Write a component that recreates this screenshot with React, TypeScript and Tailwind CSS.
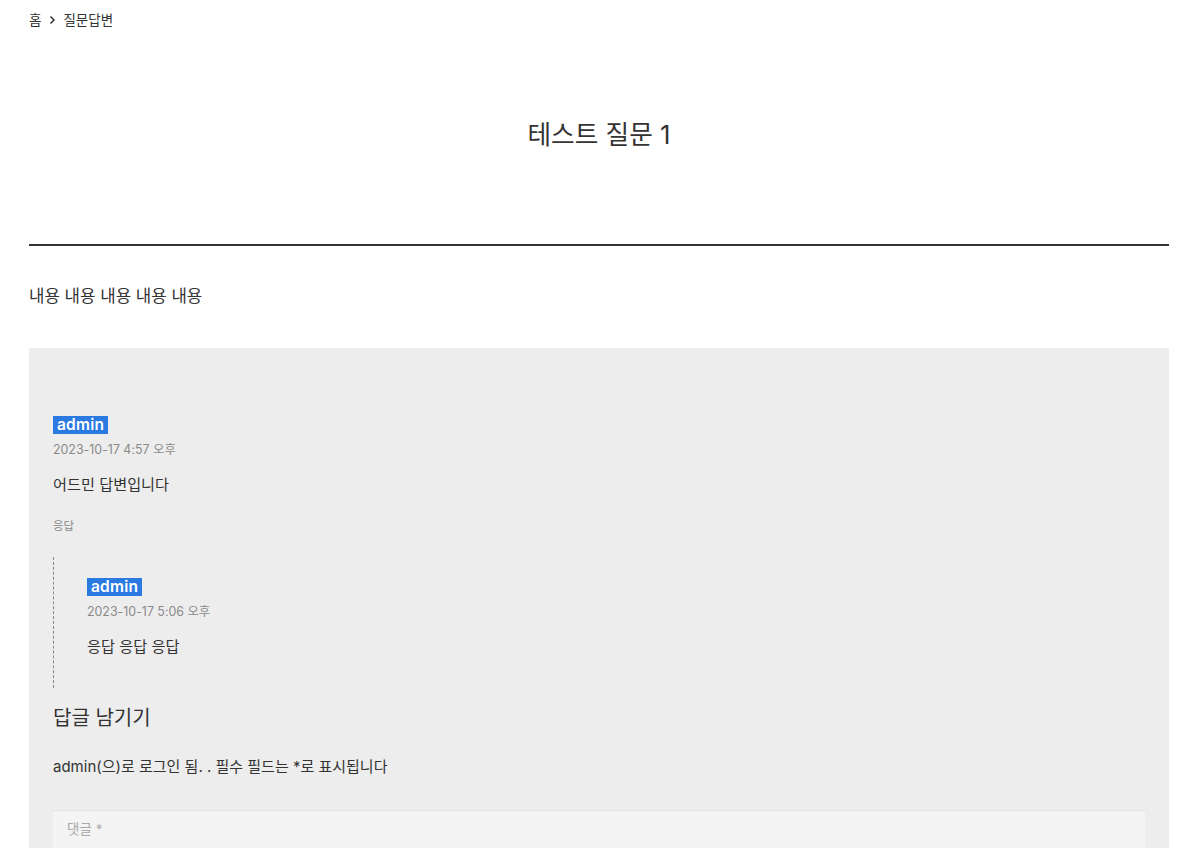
import React from "react";

const font = { fontFamily: 'Inter, "Noto Sans CJK KR", sans-serif' };

function Comment({ date, body, reply }: { date: string; body: string; reply?: boolean }) {
  return (
    <div>
      <span className="inline-block bg-[#2a7ae2] text-white font-semibold text-[15.5px] leading-[18px] px-[4px] tracking-[0.2px]">admin</span>
      <div className="mt-[5px] text-[12.4px] leading-[18px] text-[#8a8a8a]">{date}</div>
      <div className="mt-[15px] text-[15.2px] leading-[22px] text-[#333]">{body}</div>
      {reply && <div className="mt-[21px] text-[11.5px] leading-[18px] text-[#8a8a8a]">응답</div>}
    </div>
  );
}

export default function App() {
  return (
    <div className="bg-white min-h-[848px]" style={font}>
      <div className="w-[1140px] ml-[29px]">
        <div className="pt-[10px] flex items-center gap-[4px] text-[13.5px] leading-[20px] text-[#333]">
          <span>홈</span>
          <svg width="12" height="12" viewBox="0 0 12 12" className="mx-[1px]">
            <path d="M4.5 2.5 L8 6 L4.5 9.5" stroke="#333" strokeWidth="1.5" fill="none" />
          </svg>
          <span>질문답변</span>
        </div>
        <h1 className="mt-[89px] text-center text-[25.7px] leading-[32px] text-[#333] font-normal">테스트 질문 1</h1>
        <div className="mt-[93px] h-[2px] bg-[#333]" />
        <p className="mt-[39px] text-[16.8px] leading-[22px] text-[#333]">내용 내용 내용 내용 내용</p>
        <div className="mt-[41px] bg-[#ededed] px-[24px] pt-[64px] pb-[40px]">
          <Comment date="2023-10-17 4:57 오후" body="어드민 답변입니다" reply />
          <div className="mt-[22px] border-l border-dashed border-[#888] pl-[33px] pt-[17px] pb-[30px]">
            <Comment date="2023-10-17 5:06 오후" body="응답 응답 응답" />
          </div>
          <h3 className="mt-[16px] text-[20px] leading-[28px] text-[#333] font-normal">답글 남기기</h3>
          <p className="mt-[24px] text-[15px] leading-[22px] text-[#333]">admin(으)로 로그인 됨. . 필수 필드는 *로 표시됩니다</p>
          <div className="mt-[32px] bg-[#f4f4f4] border-t border-[#e2e2e2] h-[120px] px-[14px] pt-[8px] text-[13.5px] leading-[20px] text-[#aaa]">댓글 *</div>
        </div>
      </div>
    </div>
  );
}
